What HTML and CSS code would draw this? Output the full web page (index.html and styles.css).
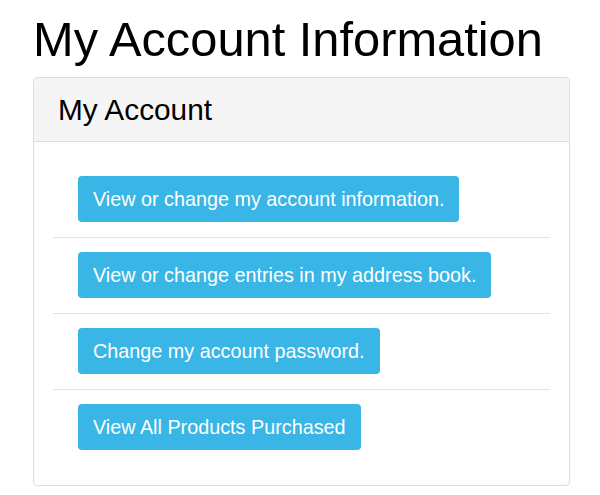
FILE: index.html
```html
<!DOCTYPE html>
<html lang="en">

<head>
    <title>My Account Information</title>
    <link rel="stylesheet" href="styles.css">
</head>

<body>
    <div class="pagina">
        <h1 class="titlu">My Account Information</h1>
        <div class="panou">
            <div class="panouCap">
                <h2>My Account</h2>
            </div>
            <div class="panouCorp">
                <ul class="lista">
                    <li><a href="#" class="buton">View or change my account information.</a></li>
                    <li><a href="#" class="buton">View or change entries in my address book.</a></li>
                    <li><a href="#" class="buton">Change my account password.</a></li>
                    <li><a href="#" class="buton">View All Products Purchased</a></li>
                </ul>
            </div>
        </div>
    </div>
</body>

</html>
```

FILE: styles.css
```css
body {
    margin: 0;
    background-color: #fff;
    font-family: "Liberation Sans", Arial, sans-serif;
    color: #000;
}

.pagina {
    padding: 0 30px 0 33px;
}

.titlu {
    margin: 0;
    padding-top: 13px;
    margin-bottom: 10px;
    font-size: 48.8px;
    font-weight: 400;
    line-height: 1.1;
}

.panou {
    border: 1px solid #ddd;
    border-radius: 4px;
}

.panouCap {
    background-color: #f5f5f5;
    border-bottom: 1px solid #ddd;
    border-radius: 4px 4px 0 0;
    padding: 15px 24px;
}

.panouCap h2 {
    margin: 0;
    font-size: 29.8px;
    font-weight: 400;
    line-height: 33px;
}

.panouCorp {
    padding: 20px 19px;
}

.lista {
    list-style: none;
    margin: 0;
    padding: 0;
}

.lista li {
    padding: 14px 25px 15px;
    border-bottom: 1px solid #e3e3e3;
}

.lista li:last-child {
    border-bottom: none;
}

.buton {
    display: inline-block;
    background-color: #39b5e6;
    color: #fff;
    text-decoration: none;
    border-radius: 4px;
    padding: 0 15px 0 15px;
    height: 46px;
    line-height: 46px;
    font-size: 19.8px;
}
```
